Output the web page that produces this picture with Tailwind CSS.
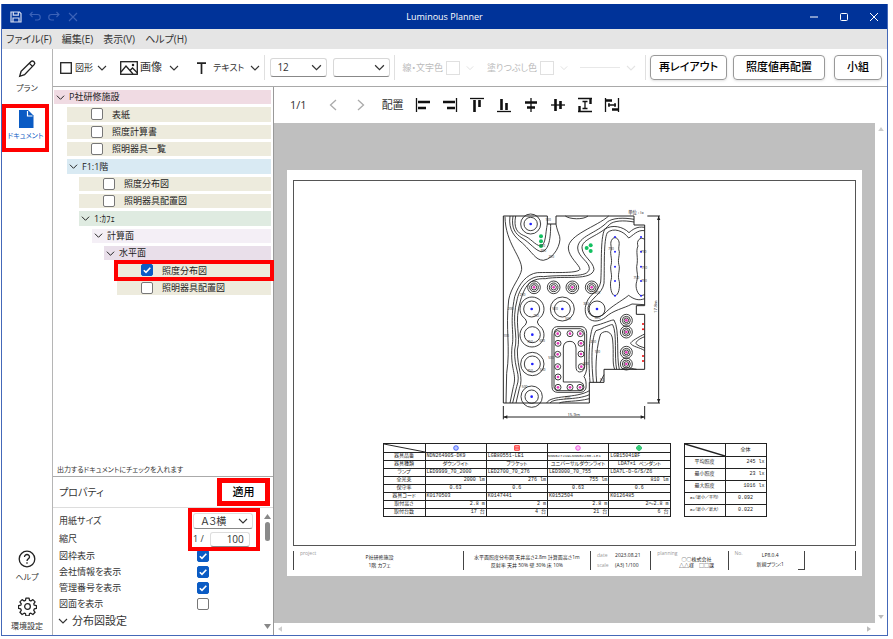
<!DOCTYPE html>
<html lang="ja">
<head>
<meta charset="utf-8">
<title>Luminous Planner</title>
<script src="https://cdn.jsdelivr.net/npm/@tailwindcss/browser@4"></script>
</head>
<body class="bg-white font-['Open_Sans','Noto_Sans_CJK_JP',sans-serif] [font-feature-settings:'palt'] text-[#333]">
<svg class="hidden">
  <symbol id="chev" viewBox="0 0 10 10"><path d="M1 3l4 4 4-4" fill="none" stroke="currentColor" stroke-width="1.1"/></symbol>
  <symbol id="tick" viewBox="0 0 12 12"><path d="M2.8 6.2l2.2 2.2 4.3-4.6" fill="none" stroke="#fff" stroke-width="1.6"/></symbol>
</svg>
<div class="h-screen pt-1 pl-px pr-[5px] pb-[3px]">
<div class="flex h-full flex-col border border-t-0 border-[#4468b8] overflow-hidden">
  <header class="grid h-[25px] shrink-0 grid-cols-3 items-center bg-[#003399] px-2 text-white">
    <div class="flex items-center gap-[7px]">
      <button aria-label="保存"><svg class="size-3" viewBox="0 0 12 12" fill="none" stroke="#d5def2" stroke-width="1.2"><path d="M1 1h8.5L11 2.500V11H1z"/><path d="M3.300 1v3.200h5V1M3 11V7h6v4"/></svg></button>
      <button aria-label="元に戻す"><svg class="h-3 w-3" viewBox="0 0 12 12" fill="none" stroke="#3c63b8" stroke-width="1.1"><path d="M3.500 1L1 3.500 3.500 6M1 3.500h7.500a2.700 2.700 0 010 5.500H6"/></svg></button>
      <button aria-label="やり直し"><svg class="h-3 w-3" viewBox="0 0 12 12" fill="none" stroke="#3c63b8" stroke-width="1.1"><path d="M8.500 1L11 3.500 8.500 6M11 3.500H3.500a2.700 2.700 0 000 5.500H6"/></svg></button>
      <button aria-label="削除"><svg class="h-3 w-3" viewBox="0 0 12 12" fill="none" stroke="#3c63b8" stroke-width="1.100"><path d="M2 2l8 8M10 2l-8 8"/></svg></button>
    </div>
    <h1 class="text-center text-[9px]">Luminous Planner</h1>
    <div class="flex items-center justify-end gap-[20px]">
      <button aria-label="最小化"><svg class="size-[10px]" viewBox="0 0 10 10"><path d="M1 5h8" stroke="#fff"/></svg></button>
      <button aria-label="最大化"><svg class="size-[10px]" viewBox="0 0 10 10"><rect x="1.500" y="1.500" width="7" height="7" rx="1" fill="none" stroke="#fff"/></svg></button>
      <button aria-label="閉じる"><svg class="size-[10px]" viewBox="0 0 10 10"><path d="M1 1l8 8M9 1l-8 8" stroke="#fff"/></svg></button>
    </div>
  </header>
  <nav class="flex h-[20px] shrink-0 items-center gap-[10px] bg-[#e5e5e5] px-1 text-[10px]">
    <a href="#">ファイル(F)</a><a href="#">編集(E)</a><a href="#">表示(V)</a><a href="#">ヘルプ(H)</a>
  </nav>
  <div class="flex min-h-0 flex-1">
    <aside class="flex w-[51px] shrink-0 flex-col items-center border-r border-[#b5b5b5] text-[8px]">
      <button class="mt-[10px] flex flex-col items-center gap-[3px]"><svg class="size-[20px]" viewBox="0 0 22 22" fill="none" stroke="#222" stroke-width="1.500"><path d="M3 19l1.500-5.500L15.500 2.800a2 2 0 012.800 0l.6.600a2 2 0 010 2.800L8.300 17.200zM13.700 4.800l3.300 3.300"/></svg><span>プラン</span></button>
      <button class="mt-[10px] mr-[3px] flex h-[48px] w-[47px] flex-col items-center gap-[3px] border-4 border-[#ff0000] pt-[2px] text-[#0a5bc4]"><svg class="h-[18px] w-4" viewBox="0 0 16 18"><path d="M1 0h9l5.500 5.500V18H1z" fill="#0a5bc4"/><path d="M9.500 1v5h5" fill="none" stroke="#fff" stroke-width="1.200"/></svg><span class="whitespace-nowrap text-[7px]">ドキュメント</span></button>
      <button class="mt-auto flex flex-col items-center gap-[3px]"><svg class="size-[18px]" viewBox="0 0 18 18" fill="none" stroke="#222" stroke-width="1.300"><circle cx="9" cy="9" r="7.800"/><path d="M6.500 7a2.500 2.500 0 115 0c0 1.700-2.500 2-2.500 4"/><path d="M9 12.300v1.500"/></svg><span>ヘルプ</span></button>
      <button class="mt-[14px] mb-[3px] flex flex-col items-center gap-1"><svg class="size-[19px]" viewBox="0 0 18 18" fill="none" stroke="#222" stroke-width="1.200" stroke-linejoin="round"><circle cx="9" cy="9" r="2.700"/><path d="M7.500 1h3l.4 2.200 1.300.6 1.900-1.300 2.100 2.100-1.300 1.900.5 1.300 2.100.4v2.600l-2.100.5-.5 1.300 1.300 1.900-2.100 2.100-1.900-1.300-1.300.5-.4 2.200h-3l-.4-2.200-1.300-.5-1.900 1.300-2.100-2.100 1.300-1.900-.5-1.300L.500 10.800V8.200l2.100-.4.5-1.300-1.300-1.900 2.100-2.100 1.900 1.300 1.300-.6z"/></svg><span>環境設定</span></button>
    </aside>
    <div class="flex min-w-0 flex-1 flex-col">
      <div class="flex h-[38px] shrink-0 items-center border-b border-[#a9a9a9] pr-[5px] pl-[7px]">
        <button class="flex items-center gap-[3px] text-[9px]"><svg class="size-3" viewBox="0 0 12 12"><rect x=".7" y=".7" width="10.600" height="10.600" fill="none" stroke="#222" stroke-width="1.300"/></svg>図形<svg class="ml-px size-[10px]"><use href="#chev"/></svg></button>
        <button class="ml-[13px] flex items-center gap-[2px] text-[11px]"><svg class="h-[14px] w-[18px]" viewBox="0 0 18 14" fill="none" stroke="#222" stroke-width="1.300"><rect x=".7" y=".7" width="16.600" height="12.600"/><path d="M1 11l5-6 7 8M10 9.500L12.500 7l5 5"/><circle cx="13" cy="4" r=".6"/></svg>画像<svg class="ml-[5px] size-[10px]"><use href="#chev"/></svg></button>
        <button class="ml-[17px] flex items-center gap-[6px] text-[9px]"><svg class="h-3 w-[11px]" viewBox="0 0 11 12"><path d="M1 1.200h9M5.500 1v11" stroke="#222" stroke-width="1.700" fill="none"/></svg><span class="whitespace-nowrap">テキスト</span><svg class="size-[10px]"><use href="#chev"/></svg></button>
        <div class="ml-1 h-[25px] border-l border-[#e0e0e0]"></div>
        <label class="ml-[5px] grid w-[57px] shrink-0 items-center text-[10px]"><select aria-label="文字サイズ" class="col-start-1 row-start-1 h-[19px] w-full appearance-none rounded-[3px] border border-[#d8d8d8] border-b-[#888] bg-white pl-[6px]"><option>12</option></select><svg class="pointer-events-none col-start-1 row-start-1 mr-[5px] size-[11px] justify-self-end"><use href="#chev"/></svg></label>
        <label class="ml-[6px] grid w-[57px] shrink-0 items-center text-[10px]"><select aria-label="線種" class="col-start-1 row-start-1 h-[19px] w-full appearance-none rounded-[3px] border border-[#d8d8d8] border-b-[#888] bg-white"><option></option></select><svg class="pointer-events-none col-start-1 row-start-1 mr-[5px] size-[11px] justify-self-end"><use href="#chev"/></svg></label>
        <div class="ml-1 h-[25px] border-l border-[#e0e0e0]"></div>
        <button disabled class="ml-[7px] flex shrink-0 items-center gap-[3px] text-[9px] text-[#bbb]">線・文字色<span class="size-[14px] border border-[#e0e0e0]"></span><svg class="ml-[3px] size-2 text-[#ddd]"><use href="#chev"/></svg></button>
        <button disabled class="ml-[13px] flex shrink-0 items-center gap-[3px] text-[9px] text-[#bbb]">塗りつぶし色<span class="size-[14px] border border-[#e0e0e0]"></span><svg class="ml-[3px] size-2 text-[#ddd]"><use href="#chev"/></svg></button>
        <button disabled aria-label="線の太さ" class="ml-3 flex flex-1 items-center gap-[6px] text-[#e4e4e4]"><span class="flex-1 border-t border-[#e8e8e8]"></span><svg class="size-[10px]"><use href="#chev"/></svg></button>
        <div class="ml-[9px] h-[25px] border-l border-[#e0e0e0]"></div>
        <div class="ml-1 flex shrink-0 gap-[6px] text-[11px] font-medium text-black">
          <button class="h-[25px] w-[77px] rounded-[4px] border border-[#999] shadow-sm">再レイアウト</button>
          <button class="h-[25px] w-[92px] rounded-[4px] border border-[#999] shadow-sm">照度値再配置</button>
          <button class="ml-[3px] h-[25px] w-[48px] rounded-[4px] border border-[#999] shadow-sm">小組</button>
        </div>
      </div>
      <div class="flex min-h-0 flex-1">
        <section class="flex w-[221px] shrink-0 flex-col border-r border-[#999]">
          <div id="tree" class="mt-[3px] grid h-[205px] auto-rows-fr gap-[3px] pl-px pr-[2px] text-[9px] text-[#222]"></div>
          <p class="mt-auto border-b border-[#aaa] pl-1 text-[7px] leading-[12px]">出力するドキュメントにチェックを入れます</p>
          <div class="flex h-[31px] shrink-0 items-center justify-between border-b border-[#ddd] pr-[3px] pl-[6px]">
            <h2 class="text-[10px]">プロパティ</h2>
            <button class="h-[28px] w-[53px] border-[5px] border-[#ff0000] text-[11px] font-medium text-black">適用</button>
          </div>
          <div class="flex h-[127px] shrink-0">
            <div class="relative flex-1 pt-1 pl-[6px] text-[9px]">
              <div class="grid grid-cols-[1fr_70px] items-center">
                <label for="paper" class="h-[18px] leading-[18px]">用紙サイズ</label>
                <div class="grid items-center pr-[8px] pl-[2px]"><select id="paper" class="col-start-1 row-start-1 h-[16px] w-full appearance-none rounded-[3px] border border-[#ddd] border-b-[#888] bg-white pl-[7px] text-[10px] leading-[14px]"><option>Ａ３横</option></select><svg class="pointer-events-none col-start-1 row-start-1 mr-[5px] size-[10px] justify-self-end"><use href="#chev"/></svg></div>
                <label for="scale" class="h-[18px] leading-[18px]">縮尺</label>
                <div class="flex items-center gap-[6px] pl-[2px]"><span>1 /</span><input id="scale" value="100" class="h-[15px] w-[40px] rounded-[3px] border border-[#ddd] border-b-[#888] pr-[5px] text-right text-[10px]"></div>
              </div>
              <div id="props" class="flex flex-col"></div>
              <button class="mt-px flex items-center gap-1 text-[11px]"><svg class="-ml-px size-[10px]"><use href="#chev"/></svg>分布図設定</button>
              <div class="pointer-events-none absolute top-0 right-px h-[43px] w-[72px] border-4 border-[#ff0000]"></div>
            </div>
            <div class="flex w-[12px] flex-col items-center justify-between py-[6px]">
              <div class="flex flex-col items-center gap-[3px]"><svg class="h-[5px] w-[7px]" viewBox="0 0 7 5"><path d="M0 5l3.500-5L7 5z" fill="#888"/></svg><span class="h-[19px] w-[5px] rounded-full bg-[#8a8a8a]"></span></div>
              <svg class="h-[5px] w-[7px]" viewBox="0 0 7 5"><path d="M0 0l3.500 5L7 0z" fill="#888"/></svg>
            </div>
          </div>
        </section>
        <main class="flex min-w-0 flex-1 flex-col">
          <div class="flex h-[36px] shrink-0 items-center pl-[16px] text-[11px]">
            <span>1/1</span>
            <button aria-label="前のページ" class="ml-[20px]"><svg class="size-3" viewBox="0 0 12 12"><path d="M9 1L3.500 6 9 11" fill="none" stroke="#aaa" stroke-width="1.300"/></svg></button>
            <button aria-label="次のページ" class="ml-4"><svg class="size-3" viewBox="0 0 12 12"><path d="M3 1l5.500 5L3 11" fill="none" stroke="#aaa" stroke-width="1.300"/></svg></button>
            <span class="mr-[11px] ml-[15px]">配置</span>
            <div id="align" class="flex gap-[11px]"></div>
          </div>
          <div class="flex min-h-0 flex-1">
            <div class="min-w-0 flex-1 bg-[#bfbfbf] px-[13px] py-[47px]">
              <article class="flex h-full flex-col bg-white px-[6px] pt-[10px] pb-[6px] text-[5px] leading-[5px] text-[#222]">
                <div class="flex flex-1 flex-col border border-[#555] pt-[25px]">
                  <div class="flex justify-center pl-[13px]"><svg id="plan" class="h-[214px] w-[170px]" viewBox="48 18 510 642" fill="none" stroke="#222" stroke-width="2.600"></svg></div>
                  <div class="mt-[23px] flex items-start justify-center gap-[13px]">
                    <table class="w-[288px] table-fixed border-collapse font-['Liberation_Mono','Noto_Sans_CJK_JP',monospace]"><colgroup><col class="w-[42px]"></colgroup><tbody id="fixtures"></tbody></table>
                    <table class="w-[83px] table-fixed border-collapse font-['Liberation_Mono','Noto_Sans_CJK_JP',monospace]"><tbody id="lux"></tbody></table>
                  </div>
                </div>
                <footer class="mt-[5px] grid h-[19px] shrink-0 grid-cols-[169fr_127fr_60fr_77fr_76fr_51fr] border-r border-[#444] text-center">
                  <div class="flex border-l border-[#444] pl-[6px]"><span class="text-[#999]">project</span><p class="flex-1 pt-[2px] pr-[20px] leading-[8px]">P社研修施設<br>1階 カフェ</p></div>
                  <p class="border-l border-[#444] pt-[2px] leading-[8px] whitespace-nowrap">水平面照度分布図 天井高さ2.8m 計算面高さ1m<br>反射率 天井 50% 壁 30% 床 10%</p>
                  <dl class="grid grid-cols-[18px_1fr] border-l border-[#444] pl-[6px] text-left leading-[9px]"><dt class="text-[#999]">date</dt><dd>2023.08.21</dd><dt class="text-[#999]">scale</dt><dd>(A3) 1/100</dd></dl>
                  <div class="flex border-l border-[#444] pl-[6px]"><span class="text-[#999]">planning</span><p class="flex-1 pt-[5px] pr-3 text-center leading-[6px] whitespace-nowrap">○○株式会社<br>△△様　□□課</p></div>
                  <div class="flex border-l border-[#444] pl-[6px]"><span class="text-[#999]">No.</span><p class="flex-1 leading-[9px]">LP8.0.4<br>新規プラン:1</p><span class="w-[6px] self-end border-b border-[#444]"></span></div>
                  <div class="border-l border-[#444]"></div>
                </footer>
              </article>
            </div>
            <div class="flex w-[12px] flex-col items-center justify-between py-1"><svg class="h-[4px] w-[6px]" viewBox="0 0 7 5"><path d="M0 5l3.500-5L7 5z" fill="#ccc"/></svg><svg class="h-[4px] w-[6px]" viewBox="0 0 7 5"><path d="M0 0l3.500 5L7 0z" fill="#bbb"/></svg></div>
          </div>
          <div class="flex h-[12px] shrink-0 items-center justify-between pr-4 pl-1"><svg class="h-[6px] w-[4px]" viewBox="0 0 5 7"><path d="M5 0L0 3.500 5 7z" fill="#ccc"/></svg><svg class="h-[6px] w-[4px]" viewBox="0 0 5 7"><path d="M0 0l5 3.500L0 7z" fill="#bbb"/></svg></div>
        </main>
      </div>
    </div>
  </div>
</div>
</div>
<script>
const box = (id, on) => `<span class="grid size-[12px] shrink-0"><input id="${id}" type="checkbox" ${on ? 'checked' : ''} class="peer col-start-1 row-start-1 size-[12px] appearance-none rounded-[2px] border border-[#777] bg-white checked:border-[#0a5bc4] checked:bg-[#0a5bc4]"><svg class="pointer-events-none col-start-1 row-start-1 hidden size-[12px] peer-checked:block"><use href="#tick"/></svg></span>`;

// Document tree: [indent, label, background, kind]
const tree = [
  [0, 'P社研修施設', 'bg-[#f0dbe3]', 'group'],
  [1, '表紙', 'bg-[#edebdd]', 'doc'], [1, '照度計算書', 'bg-[#edebdd]', 'doc'], [1, '照明器具一覧', 'bg-[#edebdd]', 'doc'],
  [1, 'F1:1階', 'bg-[#d9eaf3]', 'group'],
  [2, '照度分布図', 'bg-[#edebdd]', 'doc'], [2, '照明器具配置図', 'bg-[#edebdd]', 'doc'],
  [2, '1:ｶﾌｪ', 'bg-[#dfebe1]', 'group'],
  [3, '計算面', 'bg-[#f4eff6]', 'group'], [4, '水平面', 'bg-[#e9dfea]', 'group'],
  [5, '照度分布図', 'bg-[#edebdd]', 'on'], [5, '照明器具配置図', 'bg-[#edebdd]', 'doc']
];
const indent = ['ml-0', 'ml-[13px]', 'ml-[25px]', 'ml-[38px]', 'ml-[50px]', 'ml-[63px]'];
document.getElementById('tree').innerHTML = tree.map(([d, t, c, k], i) => k === 'group'
  ? `<button class="flex min-h-0 items-center gap-1 pl-[2px] ${indent[d]} ${c}"><svg class="size-[9px]"><use href="#chev"/></svg>${t}</button>`
  : `<div class="relative flex min-h-0 items-center gap-[9px] pl-[24px] ${indent[d]} ${c}">${box('doc' + i, k === 'on')}<label for="doc${i}">${t}</label>${k === 'on' ? '<div class="pointer-events-none absolute -inset-[3px] border-4 border-[#ff0000]"></div>' : ''}</div>`).join('');

document.getElementById('props').innerHTML = [['図枠表示', 1], ['会社情報を表示', 1], ['管理番号を表示', 1], ['図面を表示', 0]].map(([t, on], i) =>
  `<div class="flex h-[16px] items-center"><label for="p${i}" class="w-[138px]">${t}</label>${box('p' + i, on)}</div>`).join('');

const icons = [
  ['左揃え', '<path d="M1.500 1v14"/><path d="M3 5h12M3 11h8" stroke-width="2.600"/>'],
  ['右揃え', '<path d="M14.500 1v14"/><path d="M1 5h12M5 11h8" stroke-width="2.600"/>'],
  ['上揃え', '<path d="M1 1.500h14"/><path d="M5.500 3v12M10.500 3v7" stroke-width="2.600"/>'],
  ['下揃え', '<path d="M1 14.500h14"/><path d="M5.500 2v11M10.500 6v7" stroke-width="2.600"/>'],
  ['左右中央', '<path d="M8 1v14"/><path d="M2 5.500h12M4 10.500h8" stroke-width="2.600"/>'],
  ['上下中央', '<path d="M1 8h14"/><path d="M5.500 2v12M10.500 4v8" stroke-width="2.600"/>'],
  ['上下等間隔', '<path d="M1 1.500h14M1 14.500h14M8 4v8M5.500 4.500h5M5.500 11.500h5"/><path d="M13.500 2v5M2.500 9v5" stroke-width="2.400"/>'],
  ['左右等間隔', '<path d="M1.500 1v14M14.500 1v14M4 8h8M5 6v4M11 6v4"/><path d="M2 3.500h6M8 12.500h6" stroke-width="2.400"/>']
];
document.getElementById('align').innerHTML = icons.map(([n, p]) => `<button aria-label="${n}"><svg class="size-4" viewBox="0 0 16 16" fill="none" stroke="#111" stroke-width="1.300">${p}</svg></button>`).join('');

// Fixture schedule
const marks = [['#3b5bff', '<circle cx="3" cy="3" r="2.300"/>'], ['#f22', '<path d="M.700 .700h4.600v4.600H.700zM.700 3h4.600"/>'], ['#f050e0', '<circle cx="3" cy="3" r="2.300"/>'], ['#0b5', '<circle cx="3" cy="3" r="2.300"/><path d="M3 0v6M0 3h6"/>']];
const slash = '<svg class="block h-full w-full" viewBox="0 0 42 8" preserveAspectRatio="none"><path d="M0 0l42 8" stroke="#222" stroke-width="1"/></svg>';
const rows = [
  ['器具品番', 'L', 'NDN26490S-DK9', 'LGB80551-LE1', 'NNN62721W+NNN02200-LE1', 'LGB15041BF'],
  ['器具種類', 'C', 'ダウンライト', 'ブラケット', 'ユニバーサルダウンライト', 'LDA7×1 ペンダント'],
  ['ランプ', 'L', 'LED9999_70_2000', 'LED2700_70_276', 'LED3000_70_755', 'LDA7L-D-G/S/Z6'],
  ['全光束', 'R', '2000 lm', '276 lm', '755 lm', '810 lm'],
  ['保守率', 'C', '0.63', '0.6', '0.63', '0.6'],
  ['器具コード', 'L', 'K0170503', 'K0147441', 'K0152504', 'K0126485'],
  ['取付高さ', 'R', '2.8 m', '2 m', '2.8 m', '2〜2.8 m'],
  ['取付台数', 'R', '17 台', '4 台', '21 台', '6 台']
];
const al = { L: 'text-left', C: 'text-center', R: 'text-right' };
document.getElementById('fixtures').innerHTML =
  `<tr class="h-[9px]"><th class="h-[9px] border border-[#222] p-0">${slash}</th>` + marks.map(([c, s]) => `<th class="border border-[#222] p-0"><svg class="mx-auto block size-[6px]" viewBox="0 0 6 6" fill="${c}" fill-opacity=".35" stroke="${c}" stroke-width=".9">${s}</svg></th>`).join('') + '</tr>' +
  rows.map(r => `<tr class="h-[8px]"><th class="border border-[#222] p-0 font-normal whitespace-nowrap">${r[0]}</th>` + r.slice(2).map(v => `<td class="border border-[#222] p-0 whitespace-nowrap ${al[r[1]]} ${v.length > 20 ? 'text-[4px]' : 'px-px'}">${v}</td>`).join('') + '</tr>').join('');
document.getElementById('lux').innerHTML =
  `<tr class="h-[13px]"><th class="h-[13px] border border-[#222] p-0">${slash}</th><th class="border border-[#222] p-0 font-normal">全体</th></tr>` +
  [['平均照度', '245 lx'], ['最小照度', '23 lx'], ['最大照度', '1016 lx'], ['G1（最小／平均）', '0.092'], ['G2（最小／最大）', '0.022']].map(([a, b], i) =>
    `<tr class="h-[12px]"><th class="border border-[#222] p-0 font-normal whitespace-nowrap ${i > 2 ? 'text-[4px]' : ''}">${a}</th><td class="border border-[#222] p-0 px-px ${i > 2 ? 'text-center' : 'text-right'}">${b}</td></tr>`).join('');

// Floor plan with isolux contours
const ring = (x, y, rs, c) => rs.map(r => `<circle cx="${x}" cy="${y}" r="${r}"/>`).join('') + `<circle cx="${x}" cy="${y}" r="4" fill="${c}" stroke="none"/>`;
const B = '#22f', M = '#e238b8';
let p = '<path stroke-width="3" d="M70 48H202V72H228V48H462V75H494V317H469V343H494V508H372V547H328V609H70Z"/>';
p += [
  'M107 48C100 84 112 98 130 106C152 114 165 136 182 138C198 134 196 100 202 72',
  'M99 48C93 84 106 102 126 114C150 128 166 152 184 155C208 152 212 112 212 72',
  'M90 48C84 92 106 112 128 130C158 158 166 180 190 181C224 176 244 130 239 110C234 94 230 86 228 72',
  'M75 50C76 130 126 170 125 208C122 232 92 262 86 300C76 390 92 440 80 520L78 609',
  'M256 48C268 58 310 60 324 48',
  'M386 48C350 80 265 104 265 144C266 172 300 196 300 208C292 222 210 216 172 218C140 222 116 252 104 290C88 370 104 400 96 440C90 510 112 520 100 560L90 609',
  'M462 58C430 52 396 54 382 66C350 100 294 108 293 144C294 172 328 184 328 206C324 236 260 222 190 230C150 224 120 260 112 296C92 370 116 400 104 450C102 510 124 520 110 560L98 609',
  'M462 66C430 60 400 62 388 74C360 108 304 116 306 144C308 170 340 184 342 208C336 244 250 226 196 236C146 234 134 262 122 300C100 370 124 406 112 450C112 510 132 530 118 566L108 609',
  'M494 82C470 78 456 90 447 98C430 80 396 72 374 88C360 116 366 200 362 246C356 280 322 280 316 322C312 362 346 374 376 352C400 330 430 326 456 312L494 314',
  'M494 92C472 88 458 108 446 114C430 92 400 82 382 98C370 120 374 206 372 250C366 284 334 290 324 322C322 350 348 358 370 344C396 316 424 304 446 286C464 300 478 302 494 296',
  'M398 116C386 130 398 140 392 155C392 172 398 180 392 200C392 220 398 226 392 245C390 262 394 286 405 287C416 286 420 262 418 245C412 226 418 220 418 200C412 180 418 172 418 155C412 140 424 130 412 116C408 112 402 112 398 116',
  'M494 118C480 108 468 124 474 138C466 155 476 172 470 200C470 220 476 226 470 245C464 262 474 286 484 287L494 284',
  'M330 547C324 470 328 400 340 378C370 372 396 358 402 360C420 390 408 470 418 508',
  'M340 547C332 470 336 410 348 392C374 384 392 372 398 374C412 400 402 470 410 508',
  'M350 547C344 490 352 430 362 402C376 388 396 394 398 420C402 460 396 490 404 508',
  'M494 402C478 410 452 424 452 430C456 440 480 442 494 452', 'M494 410C478 416 468 424 468 430C472 438 484 440 494 444',
  'M200 609C212 584 290 596 328 572', 'M210 609C222 592 290 602 328 584', 'M238 609C254 602 290 606 328 596',
  'M360 547L372 524', 'M424 508C440 500 456 506 470 508',
  'M230 380H306Q320 382 320 400V508Q318 520 312 530Q320 540 318 564Q314 577 300 577H234Q216 577 216 560V400Q216 382 230 380Z',
  'M234 386H302Q314 388 314 402V500Q312 516 298 516Q288 514 288 500V444Q286 424 270 424Q250 424 250 444V546H300Q312 548 312 562Q312 572 300 572H236Q222 572 222 560V402Q222 388 234 386Z'
].map(d => `<path d="${d}"/>`).join('');
p += ring(152, 72, [20, 30], B);
p += '<path d="M136 357A36 36 0 1 1 176 357Q168 366 176 375A36 36 0 1 1 136 375Q144 366 136 357Z"/>';
[[155, 327, [24]], [157, 404, [24]], [157, 492, [24, 35]], [155, 590, [20, 32]], [247, 327, [24, 36]], [351, 327, [24]]].forEach(a => p += ring(a[0], a[1], a[2], B));
[162, 221, 277, 335].forEach(x => p += ring(x, 262, [8, 13, 19], M));
[361, 396, 457, 492].forEach(y => p += ring(439, y, [7, 12, 18], M));
[[233, 401], [270, 401], [301, 401], [234, 430], [303, 430], [233, 463], [303, 462], [233, 500], [304, 500], [234, 531], [234, 562], [270, 562], [300, 562]].forEach(([x, y]) => p += ring(x, y, [9], M));
const dots = (a, r, c) => a.forEach(([x, y]) => p += `<circle cx="${x}" cy="${y}" r="${r}" fill="${c}" stroke="none"/>`);
dots([[183, 109], [183, 124], [183, 138], [332, 136], [320, 144], [332, 153]], 6, '#12c060');
dots([[405, 111], [405, 155], [405, 200], [405, 243], [405, 287], [483, 111], [483, 155], [483, 200], [483, 243], [483, 287]], 3, B);
dots([[489, 372], [489, 388], [489, 468], [489, 483]], 3, '#e00');
p += '<path stroke-width="3" d="M536 48V609M502 48H540M502 609H540M70 651H494M70 618V658M494 618V658"/><path fill="#222" stroke="none" d="M536 48l-5 12h10zM536 609l-5-12h10zM70 651l12-5v10zM494 651l-12-5v10z"/>';
p += '<g fill="#222" stroke="none" font-size="13" text-anchor="middle"><text x="468" y="41">単位 : lx</text><text x="281" y="647">15.9m</text><text transform="translate(532 320) rotate(-90)">17.8m</text></g>';
p += '<g fill="#222" stroke="none" font-size="10" text-anchor="middle">' + [[204, 62, 100], [187, 142, 500], [190, 157, 300], [214, 173, 200], [393, 149, 750], [491, 158, 750], [493, 208, 750], [469, 236, 750], [492, 245, 750], [352, 283, 500], [128, 288, 200], [318, 314, 300], [225, 331, 500], [168, 350, 750], [264, 360, 500], [352, 357, 500], [78, 410, 100], [150, 430, 750], [186, 425, 500], [340, 428, 200], [213, 476, 500], [318, 495, 500], [352, 458, 100], [150, 516, 750], [188, 512, 500], [134, 564, 500], [262, 596, 200], [366, 543, 50], [92, 330, 200]].map(([x, y, t]) => `<text x="${x}" y="${y}">${t}</text>`).join('') + '</g>';
document.getElementById('plan').innerHTML = p;
</script>
</body>
</html>
